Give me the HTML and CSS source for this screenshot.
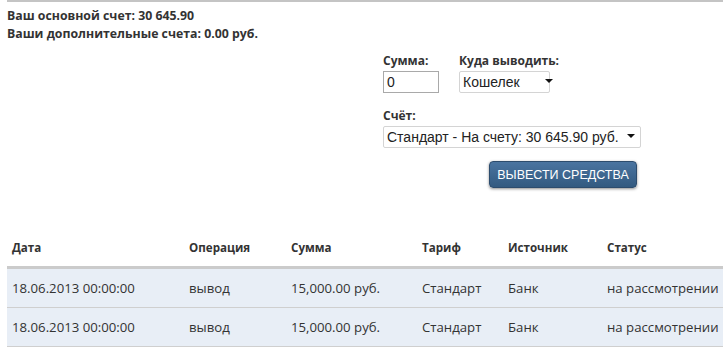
FILE: index.html
```html
<!DOCTYPE html>
<html lang="ru">
<head>
  <meta charset="UTF-8">
  <title>Вывод средств</title>
  <link rel="stylesheet" href="styles.css">
</head>
<body>
  <div class="page">
    <div class="balance">
      <p>Ваш основной счет: 30 645.90</p>
      <p>Ваши дополнительные счета: 0.00 руб.</p>
    </div>

    <form class="withdraw">
      <div class="row">
        <div class="field">
          <label for="amount">Сумма:</label>
          <input type="text" id="amount" class="amount" value="0">
        </div>
        <div class="field">
          <label for="target">Куда выводить:</label>
          <span class="select-wrap target">
            <select id="target"><option>Кошелек</option></select>
          </span>
        </div>
      </div>
      <div class="field">
        <label for="account">Счёт:</label>
        <span class="select-wrap account">
          <select id="account"><option>Стандарт - На счету: 30 645.90 руб.</option></select>
        </span>
      </div>
      <button type="button" class="submit">Вывести средства</button>
    </form>

    <table class="history">
      <thead>
        <tr>
          <th class="c-date">Дата</th>
          <th class="c-op">Операция</th>
          <th class="c-sum">Сумма</th>
          <th class="c-tariff">Тариф</th>
          <th class="c-src">Источник</th>
          <th>Статус</th>
        </tr>
      </thead>
      <tbody>
        <tr>
          <td>18.06.2013 00:00:00</td>
          <td>вывод</td>
          <td>15,000.00 руб.</td>
          <td>Стандарт</td>
          <td>Банк</td>
          <td>на рассмотрении</td>
        </tr>
        <tr>
          <td>18.06.2013 00:00:00</td>
          <td>вывод</td>
          <td>15,000.00 руб.</td>
          <td>Стандарт</td>
          <td>Банк</td>
          <td>на рассмотрении</td>
        </tr>
      </tbody>
    </table>
  </div>
</body>
</html>
```

FILE: styles.css
```css
body {
  margin: 0;
  font-family: 'Open Sans', 'DejaVu Sans', sans-serif;
  color: #333;
  background-color: #fff;
}
.page {
  margin-left: 7px;
  border-top: 2px solid #c4c4c4;
  overflow: hidden;
}
.balance {
  padding-top: 5px;
}
.balance p {
  margin: 0;
  font-size: 12.3px;
  font-weight: bold;
  line-height: 18px;
}

/* withdraw form */
.withdraw {
  margin: 11px 0 0 376px;
  display: flex;
  flex-direction: column;
  align-items: flex-start;
}
.row {
  display: flex;
  gap: 20px;
  margin-bottom: 16px;
}
.field label {
  display: block;
  font-size: 12px;
  font-weight: bold;
  line-height: 14px;
  margin-bottom: 2px;
}
.amount {
  width: 56px;
  height: 22px;
  box-sizing: border-box;
  border: 1px solid #a9a9a9;
  padding: 0 3px;
  font-family: 'Liberation Sans', Arial, sans-serif;
  font-size: 14px;
  color: #222;
}
.select-wrap {
  position: relative;
  display: block;
}
.select-wrap select {
  appearance: none;
  -webkit-appearance: none;
  height: 22px;
  box-sizing: border-box;
  border: 1px solid #d4d4d4;
  border-radius: 2px;
  background-color: #fff;
  padding: 0 3px;
  font-family: 'Liberation Sans', Arial, sans-serif;
  font-size: 14px;
  color: #222;
}
.select-wrap::after {
  content: "";
  position: absolute;
  right: 6px;
  top: 9px;
  border-left: 4px solid transparent;
  border-right: 4px solid transparent;
  border-top: 4px solid #111;
}
.target select {
  width: 91px;
}
.account select {
  width: 258px;
}
.submit {
  margin: 13px 0 0 106px;
  width: 148px;
  height: 27px;
  padding: 0;
  white-space: nowrap;
  border: 1px solid #2d4c6d;
  border-radius: 4px;
  background: linear-gradient(#4a74a0, #335a80);
  box-shadow: 0 1px 3px rgba(0, 0, 0, 0.45);
  color: #fff;
  font-family: 'Liberation Sans', Arial, sans-serif;
  font-size: 12.5px;
  text-transform: uppercase;
}

/* history table */
.history {
  margin-top: 40px;
  width: 716px;
  border-collapse: collapse;
  table-layout: fixed;
  font-size: 13.2px;
}
.history th {
  text-align: left;
  font-size: 11.6px;
  font-weight: bold;
  padding: 11px 5px 11px 5px;
  height: 16px;
  border-bottom: 3px solid #cbcbcb;
}
.history td {
  padding: 0 5px;
  height: 38px;
  white-space: nowrap;
  background-color: #e8eef6;
  border-bottom: 1px solid #cfcfcf;
}
.c-date { width: 167px; }
.c-op { width: 92px; }
.c-sum { width: 121px; }
.c-tariff { width: 76px; }
.c-src { width: 89px; }
```
